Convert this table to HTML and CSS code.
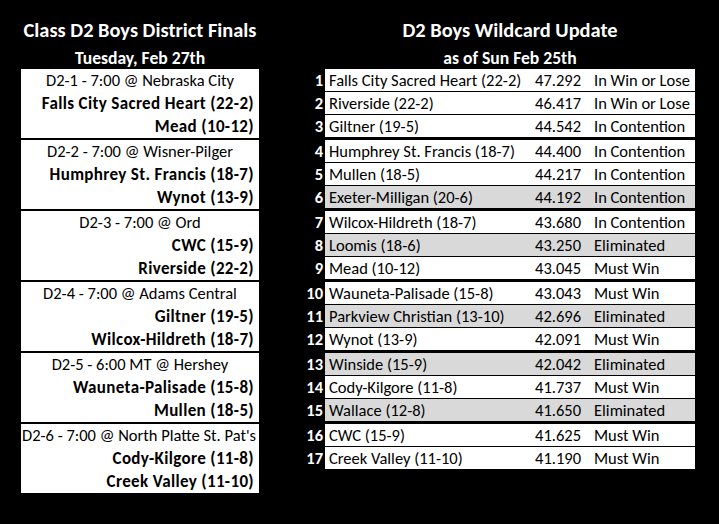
FILE: index.html
```html
<!DOCTYPE html>
<html>
<head>
<meta charset="utf-8">
<link rel="stylesheet" href="styles.css">
</head>
<body>
<div class="page">
  <section class="left">
    <h1 class="title">Class D2 Boys District Finals</h1>
    <h2 class="subtitle">Tuesday, Feb 27th</h2>
    <div class="games">
      <div class="game">
        <div class="site">D2-1 - 7:00 @ Nebraska City</div>
        <div class="team">Falls City Sacred Heart (22-2)</div>
        <div class="team">Mead (10-12)</div>
      </div>
      <div class="game">
        <div class="site">D2-2 - 7:00 @ Wisner-Pilger</div>
        <div class="team">Humphrey St. Francis (18-7)</div>
        <div class="team">Wynot (13-9)</div>
      </div>
      <div class="game">
        <div class="site">D2-3 - 7:00 @ Ord</div>
        <div class="team">CWC (15-9)</div>
        <div class="team">Riverside (22-2)</div>
      </div>
      <div class="game">
        <div class="site">D2-4 - 7:00 @ Adams Central</div>
        <div class="team">Giltner (19-5)</div>
        <div class="team">Wilcox-Hildreth (18-7)</div>
      </div>
      <div class="game">
        <div class="site">D2-5 - 6:00 MT @ Hershey</div>
        <div class="team">Wauneta-Palisade (15-8)</div>
        <div class="team">Mullen (18-5)</div>
      </div>
      <div class="game">
        <div class="site narrow">D2-6 - 7:00 @ North Platte St. Pat's</div>
        <div class="team">Cody-Kilgore (11-8)</div>
        <div class="team">Creek Valley (11-10)</div>
      </div>
    </div>
  </section>
  <section class="right">
    <h1 class="title">D2 Boys Wildcard Update</h1>
    <h2 class="subtitle">as of Sun Feb 25th</h2>
    <div class="groups">
      <div class="group">
        <div class="row"><span class="rank">1</span><span class="cells"><span class="name">Falls City Sacred Heart (22-2)</span><span class="score">47.292</span><span class="status">In Win or Lose</span></span></div>
        <div class="row"><span class="rank">2</span><span class="cells"><span class="name">Riverside (22-2)</span><span class="score">46.417</span><span class="status">In Win or Lose</span></span></div>
        <div class="row"><span class="rank">3</span><span class="cells"><span class="name">Giltner (19-5)</span><span class="score">44.542</span><span class="status">In Contention</span></span></div>
      </div>
      <div class="group">
        <div class="row"><span class="rank">4</span><span class="cells"><span class="name">Humphrey St. Francis (18-7)</span><span class="score">44.400</span><span class="status">In Contention</span></span></div>
        <div class="row"><span class="rank">5</span><span class="cells"><span class="name">Mullen (18-5)</span><span class="score">44.217</span><span class="status">In Contention</span></span></div>
        <div class="row"><span class="rank">6</span><span class="cells gray"><span class="name">Exeter-Milligan (20-6)</span><span class="score">44.192</span><span class="status">In Contention</span></span></div>
      </div>
      <div class="group">
        <div class="row"><span class="rank">7</span><span class="cells"><span class="name">Wilcox-Hildreth (18-7)</span><span class="score">43.680</span><span class="status">In Contention</span></span></div>
        <div class="row"><span class="rank">8</span><span class="cells gray"><span class="name">Loomis (18-6)</span><span class="score">43.250</span><span class="status">Eliminated</span></span></div>
        <div class="row"><span class="rank">9</span><span class="cells"><span class="name">Mead (10-12)</span><span class="score">43.045</span><span class="status">Must Win</span></span></div>
      </div>
      <div class="group">
        <div class="row"><span class="rank">10</span><span class="cells"><span class="name">Wauneta-Palisade (15-8)</span><span class="score">43.043</span><span class="status">Must Win</span></span></div>
        <div class="row"><span class="rank">11</span><span class="cells gray"><span class="name">Parkview Christian (13-10)</span><span class="score">42.696</span><span class="status">Eliminated</span></span></div>
        <div class="row"><span class="rank">12</span><span class="cells"><span class="name">Wynot (13-9)</span><span class="score">42.091</span><span class="status">Must Win</span></span></div>
      </div>
      <div class="group">
        <div class="row"><span class="rank">13</span><span class="cells gray"><span class="name">Winside (15-9)</span><span class="score">42.042</span><span class="status">Eliminated</span></span></div>
        <div class="row"><span class="rank">14</span><span class="cells"><span class="name">Cody-Kilgore (11-8)</span><span class="score">41.737</span><span class="status">Must Win</span></span></div>
        <div class="row"><span class="rank">15</span><span class="cells gray"><span class="name">Wallace (12-8)</span><span class="score">41.650</span><span class="status">Eliminated</span></span></div>
      </div>
      <div class="group">
        <div class="row"><span class="rank">16</span><span class="cells"><span class="name">CWC (15-9)</span><span class="score">41.625</span><span class="status">Must Win</span></span></div>
        <div class="row"><span class="rank">17</span><span class="cells"><span class="name">Creek Valley (11-10)</span><span class="score">41.190</span><span class="status">Must Win</span></span></div>
      </div>
    </div>
  </section>
</div>
</body>
</html>
```

FILE: styles.css
```css
html, body {
  margin: 0;
  padding: 0;
  background: #000;
}
body {
  width: 719px;
  height: 524px;
  overflow: hidden;
  font-family: Carlito, Lato, "Open Sans", sans-serif;
  color: #000;
}
.page {
  display: flex;
  padding: 0 0 0 21px;
}
.left {
  width: 238px;
}
.right {
  margin-left: 36px;
}
.title {
  margin: 0;
  color: #fff;
  font-size: 20.4px;
  font-weight: bold;
  text-align: center;
  height: 27px;
  line-height: 28px;
  padding-top: 16px;
}
.subtitle {
  margin: 0;
  color: #fff;
  font-size: 17.6px;
  font-weight: bold;
  text-align: center;
  height: 26px;
  line-height: 30px;
  white-space: nowrap;
}
.right .title, .right .subtitle {
  margin-left: 30px;
}
.games {
  display: flex;
  flex-direction: column;
  gap: 2px;
}
.game {
  background: #fff;
  height: 69px;
  display: flex;
  flex-direction: column;
  padding-right: 5px;
}
.site, .team {
  height: 23px;
  line-height: 23px;
  white-space: nowrap;
}
.site {
  font-size: 16.5px;
  text-align: center;
  padding-left: 5px;
}
.site.narrow {
  padding-left: 1px;
  text-align: left;
}
.team {
  font-size: 17px;
  letter-spacing: 0.35px;
  font-weight: bold;
  text-align: right;
}
.groups {
  display: flex;
  flex-direction: column;
  gap: 3px;
}
.group {
  display: flex;
  flex-direction: column;
  gap: 1px;
}
.row {
  display: flex;
  height: 22px;
}
.rank {
  width: 30px;
  padding-right: 2px;
  box-sizing: border-box;
  text-align: right;
  color: #fff;
  font-weight: bold;
  font-size: 16.5px;
  line-height: 23px;
}
.cells {
  width: 370px;
  background: #fff;
  display: flex;
  font-size: 16.5px;
  line-height: 23px;
  white-space: nowrap;
}
.cells.gray {
  background: #d9d9d9;
}
.name {
  width: 200px;
  padding-left: 4px;
}
.score {
  width: 52px;
  text-align: right;
}
.status {
  padding-left: 13px;
}
```
